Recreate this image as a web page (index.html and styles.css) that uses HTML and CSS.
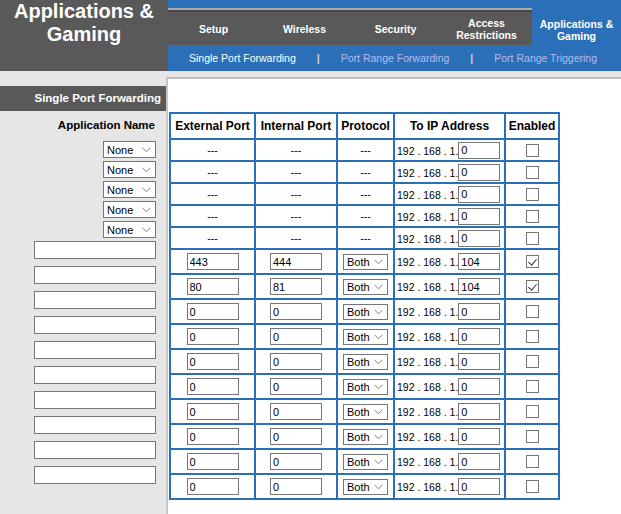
FILE: index.html
```html
<!DOCTYPE html>
<html lang="en">

<head>
    <meta charset="UTF-8">
    <meta name="viewport" content="width=device-width, initial-scale=1.0">
    <title>Applications &amp; Gaming</title>
    <link rel="stylesheet" href="styles.css">
</head>

<body>
    <div class="page">
        <header class="top">
            <div class="brand">Applications &amp;<br>Gaming</div>
            <div class="nav">
                <ul class="tabs">
                    <li class="tab">Setup</li>
                    <li class="tab">Wireless</li>
                    <li class="tab">Security</li>
                    <li class="tab">Access<br>Restrictions</li>
                    <li class="tab active">Applications &amp;<br>Gaming</li>
                </ul>
                <div class="subnav">
                    <a class="current">Single Port Forwarding</a>
                    <span class="sep">|</span>
                    <a>Port Range Forwarding</a>
                    <span class="sep">|</span>
                    <a>Port Range Triggering</a>
                </div>
            </div>
        </header>

        <div class="main">
            <aside class="side">
                <div class="side-title">Single Port Forwarding</div>
                <div class="app-label">Application Name</div>
                <div class="app-list">
                    <select class="app-select"><option>None</option><option>FTP</option><option>Telnet</option></select>
                    <select class="app-select"><option>None</option><option>FTP</option><option>Telnet</option></select>
                    <select class="app-select"><option>None</option><option>FTP</option><option>Telnet</option></select>
                    <select class="app-select"><option>None</option><option>FTP</option><option>Telnet</option></select>
                    <select class="app-select"><option>None</option><option>FTP</option><option>Telnet</option></select>
                    <input type="text" class="app-name">
                    <input type="text" class="app-name">
                    <input type="text" class="app-name">
                    <input type="text" class="app-name">
                    <input type="text" class="app-name">
                    <input type="text" class="app-name">
                    <input type="text" class="app-name">
                    <input type="text" class="app-name">
                    <input type="text" class="app-name">
                    <input type="text" class="app-name">
                </div>
            </aside>

            <section class="panel">
                <table class="ports">
                    <colgroup>
                        <col class="c-ext">
                        <col class="c-int">
                        <col class="c-proto">
                        <col class="c-ip">
                        <col class="c-on">
                    </colgroup>
                    <tr class="head">
                        <th>External Port</th>
                        <th>Internal Port</th>
                        <th>Protocol</th>
                        <th>To IP Address</th>
                        <th>Enabled</th>
                    </tr>
                    <tr class="fixed">
                        <td>---</td><td>---</td><td>---</td>
                        <td class="ip">192 . 168 . 1.<input type="text" class="host" value="0"></td>
                        <td><input type="checkbox" class="check"></td>
                    </tr>
                    <tr class="fixed">
                        <td>---</td><td>---</td><td>---</td>
                        <td class="ip">192 . 168 . 1.<input type="text" class="host" value="0"></td>
                        <td><input type="checkbox" class="check"></td>
                    </tr>
                    <tr class="fixed">
                        <td>---</td><td>---</td><td>---</td>
                        <td class="ip">192 . 168 . 1.<input type="text" class="host" value="0"></td>
                        <td><input type="checkbox" class="check"></td>
                    </tr>
                    <tr class="fixed">
                        <td>---</td><td>---</td><td>---</td>
                        <td class="ip">192 . 168 . 1.<input type="text" class="host" value="0"></td>
                        <td><input type="checkbox" class="check"></td>
                    </tr>
                    <tr class="fixed">
                        <td>---</td><td>---</td><td>---</td>
                        <td class="ip">192 . 168 . 1.<input type="text" class="host" value="0"></td>
                        <td><input type="checkbox" class="check"></td>
                    </tr>
                    <tr class="custom">
                        <td><input type="text" class="port" value="443"></td>
                        <td><input type="text" class="port" value="444"></td>
                        <td><select class="proto"><option>Both</option><option>TCP</option><option>UDP</option></select></td>
                        <td class="ip">192 . 168 . 1.<input type="text" class="host" value="104"></td>
                        <td><input type="checkbox" class="check" checked></td>
                    </tr>
                    <tr class="custom">
                        <td><input type="text" class="port" value="80"></td>
                        <td><input type="text" class="port" value="81"></td>
                        <td><select class="proto"><option>Both</option><option>TCP</option><option>UDP</option></select></td>
                        <td class="ip">192 . 168 . 1.<input type="text" class="host" value="104"></td>
                        <td><input type="checkbox" class="check" checked></td>
                    </tr>
                    <tr class="custom">
                        <td><input type="text" class="port" value="0"></td>
                        <td><input type="text" class="port" value="0"></td>
                        <td><select class="proto"><option>Both</option><option>TCP</option><option>UDP</option></select></td>
                        <td class="ip">192 . 168 . 1.<input type="text" class="host" value="0"></td>
                        <td><input type="checkbox" class="check"></td>
                    </tr>
                    <tr class="custom">
                        <td><input type="text" class="port" value="0"></td>
                        <td><input type="text" class="port" value="0"></td>
                        <td><select class="proto"><option>Both</option><option>TCP</option><option>UDP</option></select></td>
                        <td class="ip">192 . 168 . 1.<input type="text" class="host" value="0"></td>
                        <td><input type="checkbox" class="check"></td>
                    </tr>
                    <tr class="custom">
                        <td><input type="text" class="port" value="0"></td>
                        <td><input type="text" class="port" value="0"></td>
                        <td><select class="proto"><option>Both</option><option>TCP</option><option>UDP</option></select></td>
                        <td class="ip">192 . 168 . 1.<input type="text" class="host" value="0"></td>
                        <td><input type="checkbox" class="check"></td>
                    </tr>
                    <tr class="custom">
                        <td><input type="text" class="port" value="0"></td>
                        <td><input type="text" class="port" value="0"></td>
                        <td><select class="proto"><option>Both</option><option>TCP</option><option>UDP</option></select></td>
                        <td class="ip">192 . 168 . 1.<input type="text" class="host" value="0"></td>
                        <td><input type="checkbox" class="check"></td>
                    </tr>
                    <tr class="custom">
                        <td><input type="text" class="port" value="0"></td>
                        <td><input type="text" class="port" value="0"></td>
                        <td><select class="proto"><option>Both</option><option>TCP</option><option>UDP</option></select></td>
                        <td class="ip">192 . 168 . 1.<input type="text" class="host" value="0"></td>
                        <td><input type="checkbox" class="check"></td>
                    </tr>
                    <tr class="custom">
                        <td><input type="text" class="port" value="0"></td>
                        <td><input type="text" class="port" value="0"></td>
                        <td><select class="proto"><option>Both</option><option>TCP</option><option>UDP</option></select></td>
                        <td class="ip">192 . 168 . 1.<input type="text" class="host" value="0"></td>
                        <td><input type="checkbox" class="check"></td>
                    </tr>
                    <tr class="custom">
                        <td><input type="text" class="port" value="0"></td>
                        <td><input type="text" class="port" value="0"></td>
                        <td><select class="proto"><option>Both</option><option>TCP</option><option>UDP</option></select></td>
                        <td class="ip">192 . 168 . 1.<input type="text" class="host" value="0"></td>
                        <td><input type="checkbox" class="check"></td>
                    </tr>
                    <tr class="custom">
                        <td><input type="text" class="port" value="0"></td>
                        <td><input type="text" class="port" value="0"></td>
                        <td><select class="proto"><option>Both</option><option>TCP</option><option>UDP</option></select></td>
                        <td class="ip">192 . 168 . 1.<input type="text" class="host" value="0"></td>
                        <td><input type="checkbox" class="check"></td>
                    </tr>
                </table>
            </section>
        </div>
    </div>
</body>

</html>
```

FILE: styles.css
```css
body {
    margin: 0;
    font-family: "Liberation Sans", Arial, sans-serif;
    font-size: 10.5px;
    color: #000;
    background-color: #fff;
}

.page {
    display: flex;
    flex-direction: column;
    min-height: 100vh;
}

/* header */

.top {
    display: grid;
    grid-template-columns: 168px 1fr;
    height: 71px;
}

.brand {
    background-color: #595959;
    color: #fff;
    font-weight: bold;
    font-size: 20px;
    line-height: 23px;
    text-align: center;
}

.nav {
    display: flex;
    flex-direction: column;
}

.tabs {
    display: grid;
    grid-template-columns: repeat(4, 91px) 1fr;
    height: 45px;
    margin: 0;
    padding: 0;
    list-style: none;
}

.tab {
    display: flex;
    align-items: center;
    justify-content: center;
    padding-top: 12px;
    background: linear-gradient(#2b6fb8 0 8px, #a9a9b2 8px 10px, #484848 10px 12px, #595959 12px);
    color: #fff;
    font-weight: bold;
    font-size: 10.5px;
    line-height: 12px;
    text-align: center;
}

.tab.active {
    padding-top: 15px;
    background: #2b6fb8;
}

.subnav {
    display: flex;
    align-items: center;
    height: 26px;
    padding-left: 21px;
    background-color: #2b6fb8;
    font-size: 10.5px;
}

.subnav a {
    color: #b3bcef;
}

.subnav a.current {
    color: #fff;
}

.sep {
    margin: 0 21px;
    color: #d4d4d4;
    font-weight: bold;
}

/* body */

.main {
    flex: 1;
    display: grid;
    grid-template-columns: 166px 1fr;
    background-color: #e6e6e6;
}

.side {
    padding-top: 15px;
}

.side-title {
    height: 25px;
    line-height: 25px;
    padding-right: 5px;
    background-color: #595959;
    color: #fff;
    font-weight: bold;
    font-size: 11.5px;
    text-align: right;
}

.app-label {
    margin-top: 6px;
    padding-right: 11px;
    line-height: 16px;
    font-weight: bold;
    font-size: 11.5px;
    text-align: right;
}

.app-list {
    display: flex;
    flex-direction: column;
    align-items: flex-end;
    margin-top: 8px;
    padding-right: 10px;
}

input,
select {
    box-sizing: border-box;
    margin: 0;
    font-family: inherit;
    font-size: 11px;
    color: #000;
}

input[type="text"] {
    padding: 0 2px;
    border: 1px solid #767676;
    border-radius: 0;
    background: #fff;
}

select {
    appearance: none;
    padding: 0 14px 0 3px;
    border: 1px solid #767676;
    border-radius: 0;
    background: #fff url("data:image/svg+xml,%3Csvg xmlns='http://www.w3.org/2000/svg' width='9' height='6'%3E%3Cpath d='M.5.8l4 4 4-4' fill='none' stroke='%23808080'/%3E%3C/svg%3E") no-repeat right 4px center;
    line-height: 14px;
}

.app-select {
    width: 53px;
    height: 17px;
    margin-bottom: 3px;
}

.app-name {
    width: 122px;
    height: 18px;
    margin-bottom: 7px;
}

.panel {
    margin-top: 6px;
    border-top: 2px solid #bfbfbf;
    border-left: 2px solid #c6c6c6;
    background-color: #fff;
}

/* port table */

.ports {
    margin: 33px 0 0 1px;
    width: 389px;
    table-layout: fixed;
    border-collapse: collapse;
}

.c-ext { width: 85px; }
.c-int { width: 82px; }
.c-proto { width: 57px; }
.c-ip { width: 111px; }
.c-on { width: 54px; }

.ports th,
.ports td {
    padding: 0;
    border: 2px solid #2b6fb8;
    text-align: center;
    white-space: nowrap;
}

.ports th {
    height: 24px;
    font-size: 12px;
}

.fixed td {
    height: 20px;
}

.custom td {
    height: 23px;
}

.ports td.ip {
    padding-left: 2px;
    text-align: left;
}

.port {
    width: 52px;
    height: 17px;
    vertical-align: middle;
}

.host {
    width: 42px;
    height: 17px;
}

.proto {
    width: 45px;
    height: 16px;
    vertical-align: middle;
}

.check {
    appearance: none;
    position: relative;
    width: 13px;
    height: 13px;
    margin: 0;
    vertical-align: middle;
    border: 1px solid #767676;
    background: #fff;
}

.check:checked::after {
    content: "";
    position: absolute;
    left: 3px;
    top: 1px;
    width: 4px;
    height: 7px;
    border-right: 1px solid #333;
    border-bottom: 1px solid #333;
    transform: rotate(40deg);
}
```
